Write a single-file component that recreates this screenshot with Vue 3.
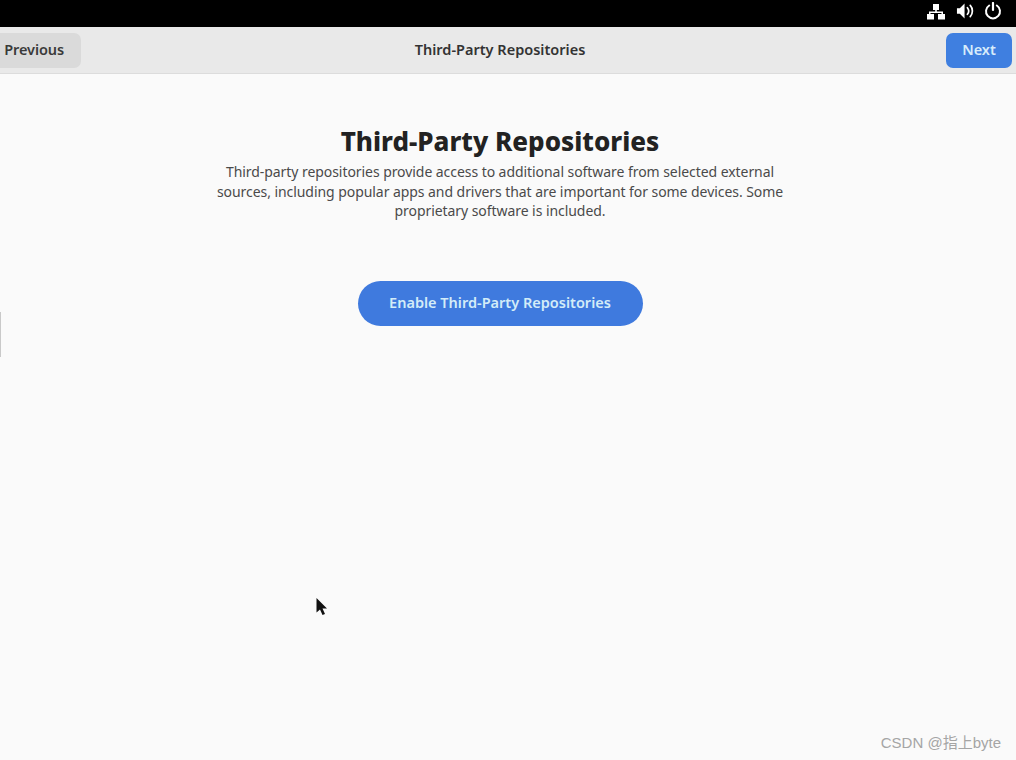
<template>
  <div class="screen">
    <div class="topbar">
      <svg class="tray network" viewBox="0 0 20 18" width="20" height="18">
        <path d="M7 2h6v6h-2.200v1.500H17V12h2v5.500h-7V12h3.500v-1H4.500v1H8v5.500H1V12h2V9.500h6.200V8H7z" fill="#fff" />
      </svg>
      <svg class="tray" viewBox="0 0 20 18" width="19" height="18">
        <path d="M1 6h3l5-5v16l-5-5H1z" fill="#fff" />
        <path d="M12 5.500c1.600 2 1.600 5 0 7M15 3c3 3.200 3 8.800 0 12" fill="none" stroke="#fff" stroke-width="1.800" stroke-linecap="round" />
      </svg>
      <svg class="tray" viewBox="0 0 18 18" width="18" height="18">
        <path d="M5.200 3.500a7 7 0 1 0 7.600 0" fill="none" stroke="#fff" stroke-width="2" stroke-linecap="round" />
        <path d="M9 1v7" fill="none" stroke="#fff" stroke-width="2.200" stroke-linecap="round" />
      </svg>
    </div>

    <header class="header">
      <button class="btn prev">Previous</button>
      <span class="header-title">Third-Party Repositories</span>
      <button class="btn next">Next</button>
    </header>

    <main class="content">
      <h1>Third-Party Repositories</h1>
      <p>
        Third-party repositories provide access to additional software from selected external<br />
        sources, including popular apps and drivers that are important for some devices. Some<br />
        proprietary software is included.
      </p>
      <button class="enable">Enable Third-Party Repositories</button>
    </main>

    <div class="edge"></div>

    <svg class="cursor" viewBox="0 0 14 22" width="14" height="22">
      <path d="M1.500 1v14.500l3.500-3 2.500 5.500 2.500-1-2.500-5.500h4.500z" fill="#111" />
    </svg>

    <div class="watermark">CSDN @指上byte</div>
  </div>
</template>

<script setup>
</script>

<style>
html,
body {
  margin: 0;
  background: #fafafa;
}
</style>

<style scoped>
.screen {
  position: relative;
  width: 1016px;
  height: 760px;
  overflow: hidden;
  background: #fafafa;
  font-family: "Noto Sans", "Noto Sans CJK SC", sans-serif;
  color: #2e2e2e;
}

.topbar {
  height: 27px;
  background: #000;
  display: flex;
  align-items: center;
  justify-content: flex-end;
  gap: 9px;
  padding-right: 14px;
  box-sizing: border-box;
}

.tray {
  display: block;
  margin-top: -6px;
}

.network {
  margin-right: 1px;
}

.header {
  height: 47px;
  box-sizing: border-box;
  background: #e9e9e9;
  border-bottom: 1px solid #dcdcdc;
  display: flex;
  align-items: center;
  justify-content: space-between;
  padding: 0 4px 0 0;
  position: relative;
}

.header-title {
  position: absolute;
  left: 0;
  right: 16px;
  top: 12px;
  text-align: center;
  font-size: 14.500px;
  font-weight: 600;
  color: #333;
}

.btn {
  height: 35px;
  border: none;
  border-radius: 7px;
  font-family: inherit;
  font-size: 14.500px;
  font-weight: 600;
  padding: 0 0 2px;
}

.prev {
  width: 81px;
  background: #dadada;
  color: #3a3a3a;
  border-radius: 0 7px 7px 0;
  text-align: right;
  padding-right: 17px;
  letter-spacing: -0.1px;
}

.next {
  width: 66px;
  background: #3f7fe0;
  color: #d8ecfb;
}

.content {
  display: flex;
  flex-direction: column;
  align-items: center;
  padding-top: 49px;
  padding-right: 16px;
}

h1 {
  margin: 0;
  font-size: 26px;
  line-height: 36px;
  font-weight: 800;
  color: #222;
}

p {
  margin: 3px 0 0;
  text-align: center;
  font-size: 14px;
  letter-spacing: -0.06px;
  line-height: 19.500px;
  color: #4a4a4a;
}

.enable {
  margin-top: 60px;
  width: 285px;
  height: 45px;
  border: none;
  border-radius: 23px;
  background: #3f7ade;
  color: #d3ecf8;
  font-family: inherit;
  font-size: 14.500px;
  font-weight: 600;
  padding: 0 0 2px;
}

.edge {
  position: absolute;
  left: 0;
  top: 312px;
  width: 1px;
  height: 45px;
  background: #c9c9c9;
}

.cursor {
  position: absolute;
  left: 315px;
  top: 597px;
}

.watermark {
  position: absolute;
  right: 15px;
  top: 731px;
  font-family: "Liberation Sans", "Noto Sans CJK SC", sans-serif;
  font-size: 15px;
  color: #a5a5a5;
}
</style>
